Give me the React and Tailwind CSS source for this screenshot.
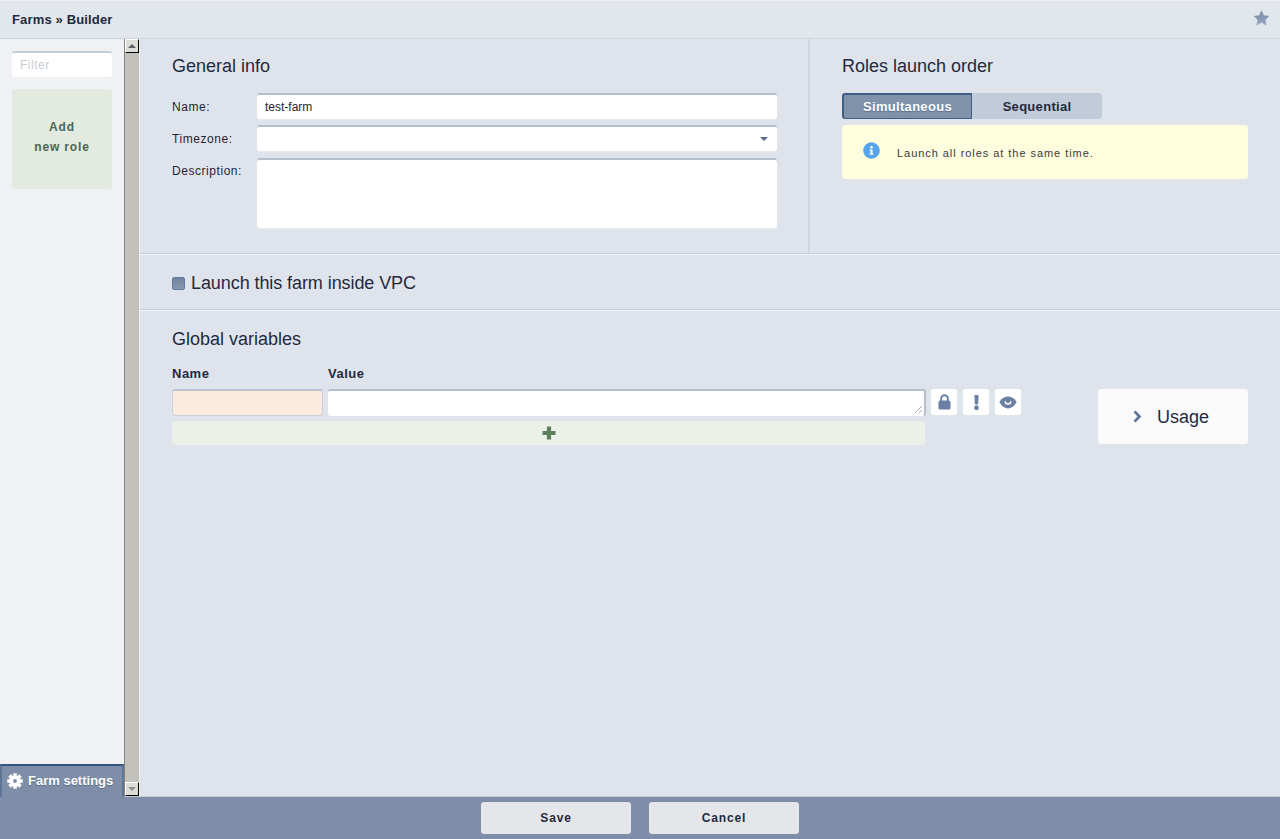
import { FaExclamation, FaInfoCircle } from "react-icons/fa";

function FieldRow({ label, labelTop = "pt-[7px]", className, children }) {
  return (
    <div className={`flex ${className}`}>
      <label className={`w-[85px] ${labelTop} text-[12px] leading-[15px] tracking-[0.55px] text-[#1f2433]`}>{label}</label>
      {children}
    </div>
  );
}

function IconTile({ children }) {
  return (
    <div className="w-[26px] h-[26px] bg-white rounded-[3px] flex items-center justify-center text-[#6a7fa3]">
      {children}
    </div>
  );
}

function CogIcon() {
  const teeth = [0, 45, 90, 135, 180, 225, 270, 315];
  return (
    <svg width="16" height="16" viewBox="0 0 16 16" className="shrink-0">
      {teeth.map((deg) => (
        <rect key={deg} x="6.2" y="0.3" width="3.6" height="4" fill="#fff" transform={`rotate(${deg} 8 8)`} />
      ))}
      <circle cx="8" cy="8" r="5.6" fill="#fff" />
      <circle cx="8" cy="8" r="1.9" fill="#7e8ea9" />
    </svg>
  );
}

function StarIcon() {
  return (
    <svg width="17" height="16" viewBox="0 0 17 16" className="mb-[3px]">
      <defs>
        <linearGradient id="star" x1="0" y1="0" x2="0" y2="1">
          <stop offset="0" stopColor="#7488ab" />
          <stop offset="1" stopColor="#98a7c2" />
        </linearGradient>
      </defs>
      <path
        d="M8.5 0.8l2.2 4.8 5.3.6-3.9 3.6 1.1 5.2-4.7-2.7-4.7 2.7 1.1-5.2L1 6.2l5.3-.6z"
        fill="url(#star)"
        stroke="#8d9dba"
        strokeWidth="0.6"
      />
    </svg>
  );
}

function LockIcon() {
  return (
    <svg width="13" height="16" viewBox="0 0 13 16">
      <path d="M3.2 7V4.6a3.3 3.3 0 0 1 6.6 0V7" fill="none" stroke="currentColor" strokeWidth="1.9" />
      <rect x="0.5" y="6.5" width="12" height="9" rx="1.6" fill="currentColor" />
    </svg>
  );
}

function EyeIcon() {
  return (
    <svg width="18" height="13" viewBox="0 0 18 13">
      <path d="M0.3 6C3 2 6 0.6 9 0.6S15 2 17.7 6C15 10.5 12 12.4 9 12.4S3 10.5 0.3 6Z" fill="currentColor" />
      <path d="M6.2 5.2a2.8 2.8 0 0 0 5.6 0" fill="none" stroke="#fff" strokeWidth="1.5" />
    </svg>
  );
}

const inputCls =
  "block w-[520px] bg-white rounded-[3px] border-t-2 border-t-[#b4bfcd] shadow-[0_1px_1px_#e8ebf0] outline-none text-[12px] text-[#1f2433] px-2";

export default function App() {
  return (
    <div className="w-[1280px] h-[839px] flex flex-col overflow-hidden bg-[#dfe4ec] text-[#1f2a40] font-['Liberation_Sans',Arial,sans-serif]">
      <div className="h-[39px] shrink-0 flex items-center justify-between pl-3 pr-[10px] bg-[#e2e6ed] border-t border-t-[#eef0f4] border-b border-b-[#ced5df]">
        <div className="text-[13px] font-bold tracking-[0.15px] text-[#1f2a40]">Farms » Builder</div>
        <StarIcon />
      </div>

      <div className="flex-1 flex min-h-0">
        <div className="w-[124px] shrink-0 bg-[#eff1f5] flex flex-col justify-between">
          <div className="px-3 pt-3">
            <input
              placeholder="Filter"
              readOnly
              className="block w-[100px] h-[26px] bg-white rounded-[3px] border-t-2 border-t-[#c3ccd8] px-2 text-[12px] tracking-[0.5px] outline-none placeholder:text-[#c9ccd2]"
            />
            <div className="mt-3 w-[100px] h-[100px] pb-1 bg-[#e3eadf] rounded-[4px] flex items-center justify-center text-center text-[12px] leading-[20px] font-bold tracking-[0.85px] text-[#4c6650]">
              <div>
                Add
                <br />
                new role
              </div>
            </div>
          </div>
          <div className="h-[33px] pb-[1px] bg-[#7e8ea9] border-t-2 border-t-[#33557f] border-x-2 border-x-[#5f7598] flex items-center pl-[5px] gap-[5px] text-white text-[13px] font-bold">
            <CogIcon />
            <span className="[text-shadow:0_1px_1px_#5a6a85]">Farm settings</span>
          </div>
        </div>

        <div className="w-[16px] shrink-0 flex flex-col justify-between bg-[#c3c1bb] border-l border-l-[#85847f] border-r border-r-[#eceef2] border-b border-b-[#c3cad6]">
          <div className="w-[14px] h-[14px] bg-[#dedcd6] border-r border-b border-r-black border-b-black border-t border-l border-t-white border-l-white flex items-center justify-center">
            <div className="w-0 h-0 border-x-[4px] border-x-transparent border-b-[4px] border-b-[#5d5f63]" />
          </div>
          <div className="w-[14px] h-[14px] bg-[#dedcd6] border-r border-b border-r-black border-b-black border-t border-l border-t-white border-l-white flex items-center justify-center">
            <div className="w-0 h-0 border-x-[4px] border-x-transparent border-t-[4px] border-t-[#8f8f8f]" />
          </div>
        </div>

        <div className="flex-1 min-w-0 flex flex-col border-b border-b-[#c3cad6]">
          <div className="h-[214px] shrink-0 flex">
            <div className="w-[668px] shrink-0 pl-8 pt-[17px]">
              <h2 className="text-[18px] leading-[20px] text-[#1f2a40]">General info</h2>
              <FieldRow label="Name:" className="mt-[17px]">
                <input readOnly value="test-farm" className={`${inputCls} h-[26px]`} />
              </FieldRow>
              <FieldRow label="Timezone:" className="mt-[6px]">
                <div className="relative">
                  <input readOnly className={`${inputCls} h-[26px]`} />
                  <div className="absolute right-[9px] top-[12px] w-0 h-0 border-x-[4px] border-x-transparent border-t-[4px] border-t-[#566b8e]" />
                </div>
              </FieldRow>
              <FieldRow label="Description:" labelTop="pt-[6px]" className="mt-[7px]">
                <div className={`${inputCls} h-[70px]`} />
              </FieldRow>
            </div>
            <div className="flex-1 border-l-2 border-l-[#cfd6e1] pl-[32px] pt-[17px]">
              <h2 className="text-[18px] leading-[20px] text-[#1f2a40]">Roles launch order</h2>
              <div className="mt-[17px] flex h-[26px] w-[260px] text-[13px] font-bold tracking-[0.3px]">
                <div className="w-[130px] flex items-center justify-center rounded-l-[3px] bg-[#8091aa] border-t-2 border-l-2 border-b border-r border-[#3f5d85] text-white [text-shadow:0_1px_1px_#5a6a85]">
                  Simultaneous
                </div>
                <div className="w-[130px] pt-[2px] flex items-center justify-center rounded-r-[3px] bg-[#c1cbda] text-[#1f2a40]">
                  Sequential
                </div>
              </div>
              <div className="mt-[6px] w-[406px] h-[54px] bg-[#fefedf] rounded-[3px] flex pl-[21px] pt-[17px]">
                <FaInfoCircle className="text-[#56a4ee] text-[17px] shrink-0" />
                <div className="ml-[17px] mt-[5px] text-[11px] leading-[13px] tracking-[0.95px] text-[#3b3b3b]">Launch all roles at the same time.</div>
              </div>
            </div>
          </div>

          <div className="h-px shrink-0 bg-[#c9cfda]" />
          <div className="h-px shrink-0 bg-[#f0f2f5]" />
          <div className="h-[54px] shrink-0 flex items-center pl-8 pt-[2px]">
            <div className="w-[13px] h-[13px] rounded-[2px] bg-gradient-to-b from-[#6f839f] to-[#8799b0] border border-[#5d7ba0]" />
            <span className="ml-[6px] text-[18px] tracking-[-0.08px] text-[#1f2a40]">Launch this farm inside VPC</span>
          </div>
          <div className="h-px shrink-0 bg-[#c9cfda]" />
          <div className="h-px shrink-0 bg-[#f0f2f5]" />

          <div className="flex-1 min-h-0 pl-8 pr-8 pt-[18px] flex">
            <div className="w-[926px] shrink-0">
              <h2 className="text-[18px] leading-[20px] text-[#1f2a40]">Global variables</h2>
              <div className="mt-[17px] flex text-[13px] leading-[15px] font-bold tracking-[0.5px]">
                <div className="w-[156px]">Name</div>
                <div>Value</div>
              </div>
              <div className="mt-[8px] flex">
                <div className="w-[151px] h-[27px] bg-[#fbebdc] rounded-[3px] border border-[#ccd0d8] border-t-2 border-t-[#bcc3cf]" />
                <div className="relative ml-[5px] w-[598px] h-[27px]">
                  <textarea
                    readOnly
                    className="block w-full h-full resize-none bg-white rounded-[3px] border-t-2 border-r-2 border-t-[#b4bfcd] border-r-[#b4bfcd] outline-none"
                  />
                  <svg width="9" height="9" viewBox="0 0 9 9" className="absolute right-[3px] bottom-[2px]">
                    <path d="M1 8L8 1M5 8L8 5" stroke="#a9a9a9" strokeWidth="1" />
                  </svg>
                </div>
                <div className="ml-[5px] flex gap-[6px]">
                  <IconTile><LockIcon /></IconTile>
                  <IconTile><FaExclamation className="text-[15px]" /></IconTile>
                  <IconTile><EyeIcon /></IconTile>
                </div>
              </div>
              <div className="mt-[5px] w-[753px] h-[24px] bg-[#ebf0e8] rounded-[3px] flex items-center justify-center">
                <svg width="14" height="14" viewBox="0 0 14 14">
                  <path d="M7 0.5V13.5M0.5 7H13.5" stroke="#5c7f5c" strokeWidth="4.2" />
                </svg>
              </div>
            </div>
            <div className="mt-[60px] w-[150px] h-[55px] bg-[#fafafb] rounded-[3px] flex items-center pl-[35px]">
              <svg width="9" height="13" viewBox="0 0 9 13">
                <path d="M1.6 1.4L6.4 6.5L1.6 11.6" fill="none" stroke="#5f7598" strokeWidth="2.8" />
              </svg>
              <span className="ml-[15px] mt-[1px] text-[18px] text-[#1f2a40]">Usage</span>
            </div>
          </div>
        </div>
      </div>

      <div className="h-[42px] shrink-0 bg-[#7e8ea9] flex items-start justify-center gap-[18px] pt-[5px]">
        <div className="w-[150px] h-[32px] bg-[#e4e6ea] rounded-[3px] flex items-center justify-center text-[12px] font-bold tracking-[0.85px] text-[#1f2a40]">Save</div>
        <div className="w-[150px] h-[32px] bg-[#e4e6ea] rounded-[3px] flex items-center justify-center text-[12px] font-bold tracking-[0.85px] text-[#1f2a40]">Cancel</div>
      </div>
    </div>
  );
}
